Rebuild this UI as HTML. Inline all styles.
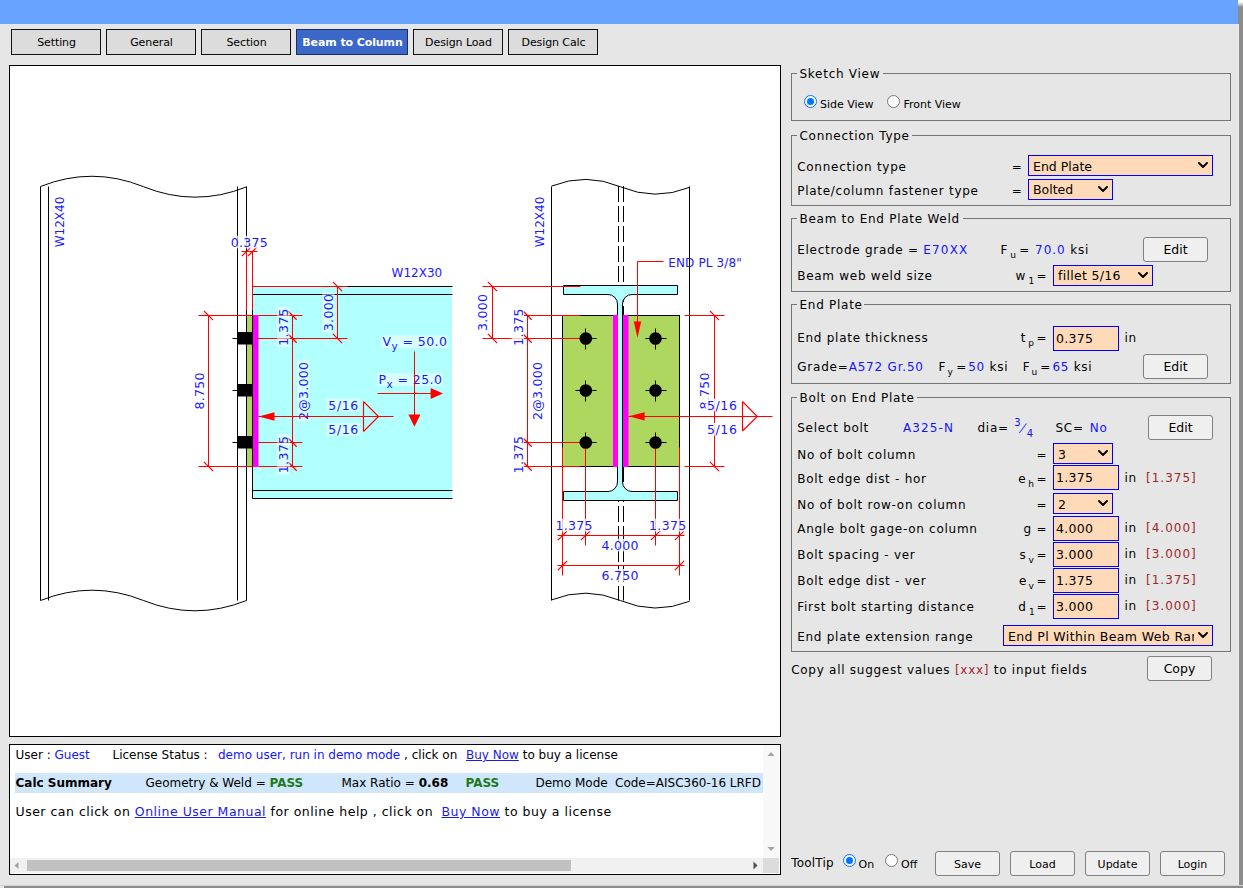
<!DOCTYPE html>
<html><head><meta charset="utf-8"><title>Beam to Column</title>
<style>
html,body{margin:0;padding:0}
body{width:1243px;height:888px;position:relative;overflow:hidden;background:#e6e6e6;font-family:'DejaVu Sans','Liberation Sans',sans-serif;font-size:12px;color:#000}
.t{position:absolute;white-space:nowrap;line-height:normal}
.b{color:#1414ff}
.r{color:#a02828}
.g{color:#1c7a1c}
.lk{color:#1a1ae6;text-decoration:underline}
.tab{position:absolute;top:29px;height:24px;line-height:25px;border:1px solid #111;background:#dcdcdc;text-align:center;font-size:11px;letter-spacing:-0.1px;padding-left:1px}
.tab.act{background:#3b67c8;color:#fff;font-weight:700;border-color:#1b2f66;letter-spacing:-0.1px}
.panel{position:absolute;border:1px solid #000;background:#fff}
.fs{position:absolute;border:1px solid #757575}
.rd{position:absolute;width:11px;height:11px;border:1px solid #767676;border-radius:50%;background:#fff}
.rd.on{border-color:#0075ff}
.rd.on i{position:absolute;left:2px;top:2px;width:7px;height:7px;border-radius:50%;background:#0075ff}
.sel,.inp{position:absolute;border:1px solid #0000ff;background:#ffdab9;white-space:nowrap;overflow:hidden;letter-spacing:0.3px}
.sel span{margin-left:4px}
.sel .cv{position:absolute;right:4px;top:50%;margin-top:-3.5px}
.inp{padding-left:2px;box-sizing:content-box;letter-spacing:0.3px}
.btn{position:absolute;overflow:hidden;border:1px solid #808080;border-radius:3px;background:#efefef;text-align:center}
</style></head>
<body>
<div style="position:absolute;left:0px;top:0px;width:1238px;height:24px;background:#68a3ff"></div>
<div style="position:absolute;left:1238px;top:0px;width:5px;height:888px;background:linear-gradient(to bottom,#fff 0,#fff 2px,#8c8c8c 7px,#8c8c8c 100%)"></div>
<div style="position:absolute;left:4px;top:886px;width:1239px;height:2px;background:#8c8c8c"></div>
<div style="position:absolute;left:0px;top:885px;width:1243px;height:1px;background:#d2d2d2"></div>
<div style="position:absolute;left:1238px;top:24px;width:1px;height:861px;background:#ececec"></div>
<div class="tab" style="left:11px;width:87px">Setting</div>
<div class="tab" style="left:106px;width:87px">General</div>
<div class="tab" style="left:201px;width:87px">Section</div>
<div class="tab act" style="left:296px;width:109px">Beam to Column</div>
<div class="tab" style="left:413px;width:87px">Design Load</div>
<div class="tab" style="left:508px;width:87px">Design Calc</div>
<div class="panel" style="left:9px;top:65px;width:770px;height:670px"></div>
<div class="panel" style="left:9px;top:744px;width:770px;height:129px"></div>
<div class="fs" style="left:791px;top:73px;width:438px;height:46px"></div>
<div style="position:absolute;left:797px;top:71px;width:86.10000000000002px;height:5px;background:#e6e6e6"></div>
<span class="t" style="left:799.50px;top:67.00px;font-size:12px;color:#000;letter-spacing:0.73px;">Sketch View</span>
<div class="fs" style="left:791px;top:135px;width:438px;height:69px"></div>
<div style="position:absolute;left:797px;top:133px;width:115.10000000000002px;height:5px;background:#e6e6e6"></div>
<span class="t" style="left:799.50px;top:129.00px;font-size:12px;color:#000;letter-spacing:0.73px;">Connection Type</span>
<div class="fs" style="left:791px;top:218px;width:438px;height:72px"></div>
<div style="position:absolute;left:797px;top:216px;width:165.79999999999995px;height:5px;background:#e6e6e6"></div>
<span class="t" style="left:799.50px;top:212.00px;font-size:12px;color:#000;letter-spacing:0.73px;">Beam to End Plate Weld</span>
<div class="fs" style="left:791px;top:304px;width:438px;height:78px"></div>
<div style="position:absolute;left:797px;top:302px;width:66.70000000000005px;height:5px;background:#e6e6e6"></div>
<span class="t" style="left:799.50px;top:298.00px;font-size:12px;color:#000;letter-spacing:0.73px;">End Plate</span>
<div class="fs" style="left:791px;top:397px;width:438px;height:253px"></div>
<div style="position:absolute;left:797px;top:395px;width:119.5px;height:5px;background:#e6e6e6"></div>
<span class="t" style="left:799.50px;top:391.00px;font-size:12px;color:#000;letter-spacing:0.73px;">Bolt on End Plate</span>
<div class="rd on" style="left:804.0px;top:95.0px"><i></i></div>
<span class="t" style="left:820.00px;top:98.00px;font-size:11px;color:#000;">Side View</span>
<div class="rd" style="left:886.7px;top:95.0px"></div>
<span class="t" style="left:903.40px;top:98.00px;font-size:11px;color:#000;">Front View</span>
<span class="t" style="left:797.20px;top:160.00px;font-size:12px;color:#000;letter-spacing:0.73px;">Connection type</span>
<span class="t" style="left:1011.70px;top:160.00px;font-size:12px;color:#000;letter-spacing:0.73px;">=</span>
<div class="sel" style="left:1028px;top:155px;width:183px;height:19px;line-height:21px;font-size:12.5px"><span style="position:relative;top:0px;letter-spacing:0px">End Plate</span><svg class="cv" width="10" height="6" viewBox="0 0 10 6"><path d="M1 1 L5 5 L9 1" fill="none" stroke="#000" stroke-width="1.9" stroke-linecap="round" stroke-linejoin="round"/></svg></div>
<span class="t" style="left:797.20px;top:184.00px;font-size:12px;color:#000;letter-spacing:0.73px;">Plate/column fastener type</span>
<span class="t" style="left:1011.70px;top:184.00px;font-size:12px;color:#000;letter-spacing:0.73px;">=</span>
<div class="sel" style="left:1028px;top:179px;width:83px;height:19px;line-height:21px;font-size:12.5px"><span style="position:relative;top:-1px;letter-spacing:0px">Bolted</span><svg class="cv" width="10" height="6" viewBox="0 0 10 6"><path d="M1 1 L5 5 L9 1" fill="none" stroke="#000" stroke-width="1.9" stroke-linecap="round" stroke-linejoin="round"/></svg></div>
<span class="t" style="left:797.20px;top:243.00px;font-size:12px;color:#000;letter-spacing:0.73px;">Electrode grade = <span class="b" style="letter-spacing:1.15px">E70XX</span></span>
<span class="t" style="left:1000.60px;top:243.00px;font-size:12px;color:#000;letter-spacing:0.73px;">F</span>
<span class="t" style="left:1010.30px;top:250.00px;font-size:9px;color:#000;">u</span>
<span class="t" style="left:1019.30px;top:243.00px;font-size:12px;color:#000;letter-spacing:0.73px;">=</span>
<span class="t" style="left:1035.00px;top:243.00px;font-size:12px;color:#000;letter-spacing:0.73px;"><span class="b" style="letter-spacing:1px">70.0</span> ksi</span>
<div class="btn" style="left:1143px;top:237px;width:63px;height:23px;line-height:23px;font-size:12.5px">Edit</div>
<span class="t" style="left:797.20px;top:269.00px;font-size:12px;color:#000;letter-spacing:0.73px;">Beam web weld size</span>
<span class="t" style="left:1015.50px;top:269.00px;font-size:12px;color:#000;letter-spacing:0.73px;">w</span>
<span class="t" style="left:1028.50px;top:276.00px;font-size:9px;color:#000;">1</span>
<span class="t" style="left:1036.50px;top:269.00px;font-size:12px;color:#000;letter-spacing:0.73px;">=</span>
<div class="sel" style="left:1053px;top:265px;width:98px;height:19px;line-height:21px;font-size:12.5px"><span style="position:relative;top:-1px">fillet 5/16</span><svg class="cv" width="10" height="6" viewBox="0 0 10 6"><path d="M1 1 L5 5 L9 1" fill="none" stroke="#000" stroke-width="1.9" stroke-linecap="round" stroke-linejoin="round"/></svg></div>
<span class="t" style="left:797.20px;top:331.00px;font-size:12px;color:#000;letter-spacing:0.73px;">End plate thickness</span>
<span class="t" style="left:1020.80px;top:331.00px;font-size:12px;color:#000;letter-spacing:0.73px;">t</span>
<span class="t" style="left:1028.30px;top:338.00px;font-size:9px;color:#000;">p</span>
<span class="t" style="left:1036.50px;top:331.00px;font-size:12px;color:#000;letter-spacing:0.73px;">=</span>
<div class="inp" style="left:1053px;top:326px;width:62px;height:23px;line-height:23px;font-size:12.5px">0.375</div>
<span class="t" style="left:1124.50px;top:331.00px;font-size:12px;color:#000;letter-spacing:0.73px;">in</span>
<span class="t" style="left:797.20px;top:360.00px;font-size:12px;color:#000;letter-spacing:0.8px;">Grade=<span class="b">A572 Gr.50</span></span>
<span class="t" style="left:938.50px;top:360.00px;font-size:12px;color:#000;letter-spacing:0.73px;">F</span>
<span class="t" style="left:947.60px;top:367.00px;font-size:9px;color:#000;">y</span>
<span class="t" style="left:956.30px;top:360.00px;font-size:12px;color:#000;letter-spacing:0.73px;">=</span>
<span class="t" style="left:968.20px;top:360.00px;font-size:12px;color:#000;letter-spacing:0.73px;"><span class="b">50</span> ksi</span>
<span class="t" style="left:1022.70px;top:360.00px;font-size:12px;color:#000;letter-spacing:0.73px;">F</span>
<span class="t" style="left:1031.40px;top:367.00px;font-size:9px;color:#000;">u</span>
<span class="t" style="left:1040.20px;top:360.00px;font-size:12px;color:#000;letter-spacing:0.73px;">=</span>
<span class="t" style="left:1052.40px;top:360.00px;font-size:12px;color:#000;letter-spacing:0.73px;"><span class="b">65</span> ksi</span>
<div class="btn" style="left:1143px;top:354px;width:63px;height:23px;line-height:23px;font-size:12.5px">Edit</div>
<span class="t" style="left:797.20px;top:421.00px;font-size:12px;color:#000;letter-spacing:0.73px;">Select bolt</span>
<span class="t" style="left:903.00px;top:421.00px;font-size:12px;color:#000;letter-spacing:1.1px;"><span class="b">A325-N</span></span>
<span class="t" style="left:977.50px;top:421.00px;font-size:12px;color:#000;letter-spacing:0.73px;">dia=</span>
<span class="t" style="left:1014.20px;top:417.00px;font-size:10px;color:#000;"><span class="b">3</span></span>
<span class="t" style="left:1020.60px;top:421.00px;font-size:11.5px;color:#000;"><span class="b" style="display:inline-block;transform:skewX(-24deg)">/</span></span>
<span class="t" style="left:1026.80px;top:428.00px;font-size:10px;color:#000;"><span class="b">4</span></span>
<span class="t" style="left:1055.50px;top:421.00px;font-size:12px;color:#000;letter-spacing:0.73px;">SC=</span>
<span class="t" style="left:1089.70px;top:421.00px;font-size:12px;color:#000;letter-spacing:0.73px;"><span class="b">No</span></span>
<div class="btn" style="left:1148px;top:415px;width:63px;height:23px;line-height:23px;font-size:12.5px">Edit</div>
<span class="t" style="left:797.20px;top:448.00px;font-size:12px;color:#000;letter-spacing:0.73px;">No of bolt column</span>
<span class="t" style="left:1036.50px;top:448.00px;font-size:12px;color:#000;letter-spacing:0.73px;">=</span>
<div class="sel" style="left:1053px;top:443px;width:58px;height:19px;line-height:21px;font-size:12.5px"><span style="position:relative;top:0px">3</span><svg class="cv" width="10" height="6" viewBox="0 0 10 6"><path d="M1 1 L5 5 L9 1" fill="none" stroke="#000" stroke-width="1.9" stroke-linecap="round" stroke-linejoin="round"/></svg></div>
<span class="t" style="left:797.20px;top:472.00px;font-size:12px;color:#000;letter-spacing:0.73px;">Bolt edge dist - hor</span>
<span class="t" style="left:1018.20px;top:472.00px;font-size:12px;color:#000;letter-spacing:0.73px;">e</span>
<span class="t" style="left:1028.30px;top:479.00px;font-size:9px;color:#000;">h</span>
<span class="t" style="left:1036.50px;top:472.00px;font-size:12px;color:#000;letter-spacing:0.73px;">=</span>
<div class="inp" style="left:1053px;top:465px;width:62px;height:23px;line-height:23px;font-size:12.5px">1.375</div>
<span class="t" style="left:1124.50px;top:471.00px;font-size:12px;color:#000;letter-spacing:0.73px;">in</span>
<span class="t" style="left:1146.00px;top:471.00px;font-size:12px;color:#000;letter-spacing:1.0px;"><span class="r">[1.375]</span></span>
<span class="t" style="left:797.20px;top:498.00px;font-size:12px;color:#000;letter-spacing:0.73px;">No of bolt row-on column</span>
<span class="t" style="left:1036.50px;top:498.00px;font-size:12px;color:#000;letter-spacing:0.73px;">=</span>
<div class="sel" style="left:1053px;top:493px;width:58px;height:19px;line-height:21px;font-size:12.5px"><span style="position:relative;top:0px">2</span><svg class="cv" width="10" height="6" viewBox="0 0 10 6"><path d="M1 1 L5 5 L9 1" fill="none" stroke="#000" stroke-width="1.9" stroke-linecap="round" stroke-linejoin="round"/></svg></div>
<span class="t" style="left:797.20px;top:522.00px;font-size:12px;color:#000;letter-spacing:0.73px;">Angle bolt gage-on column</span>
<span class="t" style="left:1023.50px;top:522.00px;font-size:12px;color:#000;letter-spacing:0.73px;">g</span>
<span class="t" style="left:1036.50px;top:522.00px;font-size:12px;color:#000;letter-spacing:0.73px;">=</span>
<div class="inp" style="left:1053px;top:516px;width:62px;height:23px;line-height:23px;font-size:12.5px">4.000</div>
<span class="t" style="left:1124.50px;top:521.00px;font-size:12px;color:#000;letter-spacing:0.73px;">in</span>
<span class="t" style="left:1146.00px;top:521.00px;font-size:12px;color:#000;letter-spacing:1.0px;"><span class="r">[4.000]</span></span>
<span class="t" style="left:797.20px;top:548.00px;font-size:12px;color:#000;letter-spacing:0.73px;">Bolt spacing - ver</span>
<span class="t" style="left:1019.50px;top:548.00px;font-size:12px;color:#000;letter-spacing:0.73px;">s</span>
<span class="t" style="left:1028.50px;top:555.00px;font-size:9px;color:#000;">v</span>
<span class="t" style="left:1036.50px;top:548.00px;font-size:12px;color:#000;letter-spacing:0.73px;">=</span>
<div class="inp" style="left:1053px;top:542px;width:62px;height:23px;line-height:23px;font-size:12.5px">3.000</div>
<span class="t" style="left:1124.50px;top:547.00px;font-size:12px;color:#000;letter-spacing:0.73px;">in</span>
<span class="t" style="left:1146.00px;top:547.00px;font-size:12px;color:#000;letter-spacing:1.0px;"><span class="r">[3.000]</span></span>
<span class="t" style="left:797.20px;top:574.00px;font-size:12px;color:#000;letter-spacing:0.73px;">Bolt edge dist - ver</span>
<span class="t" style="left:1019.00px;top:574.00px;font-size:12px;color:#000;letter-spacing:0.73px;">e</span>
<span class="t" style="left:1028.50px;top:581.00px;font-size:9px;color:#000;">v</span>
<span class="t" style="left:1036.50px;top:574.00px;font-size:12px;color:#000;letter-spacing:0.73px;">=</span>
<div class="inp" style="left:1053px;top:568px;width:62px;height:23px;line-height:23px;font-size:12.5px">1.375</div>
<span class="t" style="left:1124.50px;top:573.00px;font-size:12px;color:#000;letter-spacing:0.73px;">in</span>
<span class="t" style="left:1146.00px;top:573.00px;font-size:12px;color:#000;letter-spacing:1.0px;"><span class="r">[1.375]</span></span>
<span class="t" style="left:797.20px;top:600.00px;font-size:12px;color:#000;letter-spacing:0.73px;">First bolt starting distance</span>
<span class="t" style="left:1018.20px;top:600.00px;font-size:12px;color:#000;letter-spacing:0.73px;">d</span>
<span class="t" style="left:1029.00px;top:607.00px;font-size:9px;color:#000;">1</span>
<span class="t" style="left:1036.50px;top:600.00px;font-size:12px;color:#000;letter-spacing:0.73px;">=</span>
<div class="inp" style="left:1053px;top:594px;width:62px;height:23px;line-height:23px;font-size:12.5px">3.000</div>
<span class="t" style="left:1124.50px;top:599.00px;font-size:12px;color:#000;letter-spacing:0.73px;">in</span>
<span class="t" style="left:1146.00px;top:599.00px;font-size:12px;color:#000;letter-spacing:1.0px;"><span class="r">[3.000]</span></span>
<span class="t" style="left:797.20px;top:630.00px;font-size:12px;color:#000;letter-spacing:0.73px;">End plate extension range</span>
<div class="sel" style="left:1003px;top:625px;width:208px;height:19px;line-height:21px;font-size:12.5px;letter-spacing:0.38px"><span style="display:inline-block;width:186px;overflow:hidden;white-space:nowrap;vertical-align:top">End Pl Within Beam Web Range</span><svg class="cv" width="10" height="6" viewBox="0 0 10 6"><path d="M1 1 L5 5 L9 1" fill="none" stroke="#000" stroke-width="1.9" stroke-linecap="round" stroke-linejoin="round"/></svg></div>
<span class="t" style="left:791.20px;top:663.00px;font-size:12px;color:#000;letter-spacing:0.73px;">Copy all suggest values <span class="r">[xxx]</span> to input fields</span>
<div class="btn" style="left:1147px;top:656px;width:63px;height:23px;line-height:23px;font-size:12.5px">Copy</div>
<span class="t" style="left:791.20px;top:856.00px;font-size:12px;color:#000;letter-spacing:0.2px;">ToolTip</span>
<div class="rd on" style="left:842.8px;top:854.2px"><i></i></div>
<span class="t" style="left:858.60px;top:857.50px;font-size:11px;color:#000;">On</span>
<div class="rd" style="left:884.5px;top:854.2px"></div>
<span class="t" style="left:901.00px;top:857.50px;font-size:11px;color:#000;">Off</span>
<div class="btn" style="left:935px;top:851px;width:63px;height:23px;line-height:25px;font-size:11px">Save</div>
<div class="btn" style="left:1010px;top:851px;width:63px;height:23px;line-height:25px;font-size:11px">Load</div>
<div class="btn" style="left:1085px;top:851px;width:63px;height:23px;line-height:25px;font-size:11px">Update</div>
<div class="btn" style="left:1160px;top:851px;width:63px;height:23px;line-height:25px;font-size:11px">Login</div>
<span class="t" style="left:15.50px;top:748.00px;font-size:12px;color:#000;">User : <span class="b">Guest</span></span>
<span class="t" style="left:112.50px;top:748.00px;font-size:12px;color:#000;">License Status :</span>
<span class="t" style="left:218.00px;top:748.00px;font-size:12px;color:#000;"><span class="b">demo user, run in demo mode</span> , click on</span>
<span class="t" style="left:466.00px;top:748.00px;font-size:12px;color:#000;"><span class="lk">Buy Now</span> to buy a license</span>
<div style="position:absolute;left:15px;top:773px;width:748px;height:20px;background:#cfe6fb"></div>
<span class="t" style="left:15.50px;top:776.00px;font-size:12px;color:#000;font-weight:700;">Calc Summary</span>
<span class="t" style="left:145.50px;top:776.00px;font-size:12px;color:#000;">Geometry &amp; Weld = <b class="g">PASS</b></span>
<span class="t" style="left:341.50px;top:776.00px;font-size:12px;color:#000;">Max Ratio = <b>0.68</b></span>
<span class="t" style="left:465.50px;top:776.00px;font-size:12px;color:#000;"><b class="g">PASS</b></span>
<span class="t" style="left:535.50px;top:776.00px;font-size:12px;color:#000;">Demo Mode</span>
<span class="t" style="left:615.00px;top:776.00px;font-size:12px;color:#000;">Code=AISC360-16 LRFD</span>
<span class="t" style="left:15.50px;top:804.00px;font-size:12.5px;color:#000;letter-spacing:0.5px;">User can click on <span class="lk">Online User Manual</span> for online help , click on</span>
<span class="t" style="left:441.50px;top:804.00px;font-size:12.5px;color:#000;letter-spacing:0.5px;"><span class="lk">Buy Now</span> to buy a license</span>
<div style="position:absolute;left:763px;top:745px;width:16px;height:113px;background:#f8f8f8"></div>
<div style="position:absolute;left:10px;top:858px;width:769px;height:15px;background:#f1f1f1"></div>
<div style="position:absolute;left:763px;top:858px;width:16px;height:15px;background:#dcdcdc"></div>
<div style="position:absolute;left:27px;top:860px;width:544px;height:11px;background:#c1c1c1"></div>
<svg style="position:absolute;left:763px;top:745px" width="16" height="113"><path d="M4.5 11 L8 7 L11.5 11Z" fill="#a3a3a3"/><path d="M4.5 102 L8 106 L11.5 102Z" fill="#a3a3a3"/></svg>
<svg style="position:absolute;left:10px;top:858px" width="770" height="15"><path d="M8.5 4 L4.5 7.5 L8.5 11Z" fill="#a3a3a3"/><path d="M743.5 3.5 L747.5 7.5 L743.5 11.5Z" fill="#505050"/></svg>
<svg style="position:absolute;left:10px;top:66px" width="770" height="670" viewBox="10 66 770 670" font-family="'DejaVu Sans','Liberation Sans',sans-serif">
<path d="M40.5,186.5 Q92.0,165.9 143.5,186.7 Q195.0,207.5 246.5,186.9 M40.5,600.5 Q92.0,579.9 143.5,600.5 Q195.0,621.1 246.5,600.5" fill="none" stroke="#000" stroke-width="1"/>
<line x1="40.5" y1="186.5" x2="40.5" y2="600.5" stroke="#000" stroke-width="1" />
<line x1="48.5" y1="186.5" x2="48.5" y2="600.5" stroke="#000" stroke-width="1" />
<line x1="237.5" y1="186.5" x2="237.5" y2="600.5" stroke="#000" stroke-width="1" />
<line x1="246.5" y1="186.5" x2="246.5" y2="600.5" stroke="#000" stroke-width="1" />
<rect x="252.5" y="286.5" width="199.5" height="212.0" fill="#b2ffff"/>
<line x1="252.5" y1="286.5" x2="452.5" y2="286.5" stroke="#000" stroke-width="1" />
<line x1="252.5" y1="498.5" x2="452.5" y2="498.5" stroke="#000" stroke-width="1" />
<line x1="252.5" y1="294.5" x2="452.5" y2="294.5" stroke="#000" stroke-width="1" />
<line x1="252.5" y1="490.5" x2="452.5" y2="490.5" stroke="#000" stroke-width="1" />
<line x1="252.5" y1="286.5" x2="252.5" y2="498.5" stroke="#000" stroke-width="1" />
<rect x="246.5" y="315.5" width="6" height="151.0" fill="#aed75f" stroke="#000" stroke-width="1"/>
<rect x="253" y="315.0" width="5.5" height="152.0" fill="#ff00ff"/>
<rect x="237" y="332.0" width="16" height="12.5" fill="#000"/>
<line x1="232.5" y1="338.5" x2="237.5" y2="338.5" stroke="#000" stroke-width="1" />
<rect x="237" y="384.0" width="16" height="12.5" fill="#000"/>
<line x1="232.5" y1="390.5" x2="237.5" y2="390.5" stroke="#000" stroke-width="1" />
<rect x="237" y="436.0" width="16" height="12.5" fill="#000"/>
<line x1="232.5" y1="442.5" x2="237.5" y2="442.5" stroke="#000" stroke-width="1" />
<line x1="246.5" y1="251.5" x2="246.5" y2="310.5" stroke="#ff0000" stroke-width="1" />
<line x1="252.5" y1="251.5" x2="252.5" y2="310.5" stroke="#ff0000" stroke-width="1" />
<line x1="241.5" y1="251.5" x2="257.5" y2="251.5" stroke="#ff0000" stroke-width="1" />
<line x1="241.9" y1="256.1" x2="251.1" y2="246.9" stroke="#ff0000" stroke-width="1.25"/>
<line x1="247.9" y1="256.1" x2="257.1" y2="246.9" stroke="#ff0000" stroke-width="1.25"/>
<g transform="translate(230.8,246.8)"><rect x="-1.4" y="-11.0" width="40.1" height="12.6" fill="#fff" fill-opacity="0.75"/><text font-size="12.5" fill="#1a1aff" letter-spacing="0.3">0.375</text></g>
<line x1="198.5" y1="315.5" x2="252.5" y2="315.5" stroke="#ff0000" stroke-width="1" />
<line x1="198.5" y1="466.5" x2="252.5" y2="466.5" stroke="#ff0000" stroke-width="1" />
<line x1="208.5" y1="315.5" x2="208.5" y2="466.5" stroke="#ff0000" stroke-width="1" />
<line x1="203.9" y1="310.9" x2="213.1" y2="320.1" stroke="#ff0000" stroke-width="1.25"/>
<line x1="203.9" y1="461.9" x2="213.1" y2="471.1" stroke="#ff0000" stroke-width="1.25"/>
<g transform="translate(204.4,390.8) rotate(-90)"><rect x="-20.0" y="-11.0" width="40.1" height="12.6" fill="#fff" fill-opacity="0.75"/><text font-size="12.5" fill="#1a1aff" text-anchor="middle" letter-spacing="0.3">8.750</text></g>
<line x1="258.5" y1="315.5" x2="302.5" y2="315.5" stroke="#ff0000" stroke-width="1" />
<line x1="258.5" y1="466.5" x2="302.5" y2="466.5" stroke="#ff0000" stroke-width="1" />
<line x1="257.5" y1="338.5" x2="347.5" y2="338.5" stroke="#ff0000" stroke-width="1" />
<line x1="258.5" y1="442.5" x2="302.5" y2="442.5" stroke="#ff0000" stroke-width="1" />
<line x1="292.5" y1="315.5" x2="292.5" y2="466.5" stroke="#ff0000" stroke-width="1" />
<line x1="288.3" y1="311.3" x2="296.7" y2="319.7" stroke="#ff0000" stroke-width="1.25"/>
<line x1="288.3" y1="334.3" x2="296.7" y2="342.7" stroke="#ff0000" stroke-width="1.25"/>
<line x1="288.3" y1="438.3" x2="296.7" y2="446.7" stroke="#ff0000" stroke-width="1.25"/>
<line x1="288.3" y1="462.3" x2="296.7" y2="470.7" stroke="#ff0000" stroke-width="1.25"/>
<g transform="translate(288.2,327) rotate(-90)"><rect x="-20.0" y="-11.0" width="40.1" height="12.6" fill="#fff" fill-opacity="0.5"/><text font-size="12.5" fill="#1a1aff" text-anchor="middle" letter-spacing="0.3">1.375</text></g>
<g transform="translate(288.2,454.5) rotate(-90)"><rect x="-20.0" y="-11.0" width="40.1" height="12.6" fill="#fff" fill-opacity="0.5"/><text font-size="12.5" fill="#1a1aff" text-anchor="middle" letter-spacing="0.3">1.375</text></g>
<g transform="translate(308.3,390.8) rotate(-90)"><rect x="-30.6" y="-11.0" width="61.2" height="12.6" fill="#fff" fill-opacity="0.5"/><text font-size="12.5" fill="#1a1aff" text-anchor="middle" letter-spacing="0.3">2@3.000</text></g>
<line x1="252.5" y1="286.5" x2="347.5" y2="286.5" stroke="#ff0000" stroke-width="1" />
<line x1="337.5" y1="286.5" x2="337.5" y2="338.5" stroke="#ff0000" stroke-width="1" />
<line x1="332.9" y1="281.9" x2="342.1" y2="291.1" stroke="#ff0000" stroke-width="1.25"/>
<line x1="332.9" y1="333.9" x2="342.1" y2="343.1" stroke="#ff0000" stroke-width="1.25"/>
<g transform="translate(333.2,312.5) rotate(-90)"><rect x="-20.0" y="-11.0" width="40.1" height="12.6" fill="#fff" fill-opacity="0.5"/><text font-size="12.5" fill="#1a1aff" text-anchor="middle" letter-spacing="0.3">3.000</text></g>
<line x1="258.5" y1="416.5" x2="393.5" y2="416.5" stroke="#ff0000" stroke-width="1" />
<path d="M258.6,416.5 L274.5,412.3 L274.5,420.7Z" fill="#ff0000"/>
<path d="M363.5,401.5 L363.5,431.5 M363.5,401.5 L378.5,416.5 L363.5,431.5" fill="none" stroke="#ff0000" stroke-width="1.15"/>
<g transform="translate(328.3,409.5)"><rect x="-1.4" y="-11.0" width="33.4" height="12.6" fill="#fff" fill-opacity="0.5"/><text font-size="12.5" fill="#1a1aff" letter-spacing="0.65">5/16</text></g>
<g transform="translate(328.3,434)"><rect x="-1.4" y="-11.0" width="33.4" height="12.6" fill="#fff" fill-opacity="0.5"/><text font-size="12.5" fill="#1a1aff" letter-spacing="0.65">5/16</text></g>
<g transform="translate(382.6,346.4)"><rect x="-1.4" y="-11.0" width="67.3" height="12.6" fill="#fff" fill-opacity="0.5"/><text font-size="12.5" fill="#1a1aff" letter-spacing="0.4">V<tspan font-size="10.5" dy="3.8">y</tspan><tspan dy="-3.8"> = 50.0</tspan></text></g>
<g transform="translate(378.6,384.3)"><rect x="-1.4" y="-11.0" width="65.8" height="12.6" fill="#fff" fill-opacity="0.5"/><text font-size="12.5" fill="#1a1aff" letter-spacing="0.4">P<tspan font-size="10.5" dy="3.8">x</tspan><tspan dy="-3.8"> = 25.0</tspan></text></g>
<line x1="414.5" y1="351.5" x2="414.5" y2="416.5" stroke="#ff0000" stroke-width="1" />
<path d="M414.4,426.8 L408.4,414.4 L420.4,414.4Z" fill="#ff0000"/>
<line x1="377.5" y1="393.5" x2="432.5" y2="393.5" stroke="#ff0000" stroke-width="1" />
<path d="M443,393.5 L430.6,387.9 L430.6,399.1Z" fill="#ff0000"/>
<g transform="translate(391.6,276.6)"><text font-size="12" fill="#1a1aff" letter-spacing="0">W12X30</text></g>
<g transform="translate(63.8,222) rotate(-90)"><text font-size="12" fill="#1a1aff" text-anchor="middle" letter-spacing="0">W12X40</text></g>
<path d="M551.5,186.1 Q586.0,172.3 620.5,186.8 Q655.0,201.2 689.5,187.4 M551.5,599.9 Q586.0,586.1 620.5,600.6 Q655.0,615.1 689.5,601.3" fill="none" stroke="#000" stroke-width="1"/>
<line x1="551.5" y1="186.5" x2="551.5" y2="600.5" stroke="#000" stroke-width="1" />
<line x1="689.5" y1="186.5" x2="689.5" y2="600.5" stroke="#000" stroke-width="1" />
<line x1="618.5" y1="186" x2="618.5" y2="600.5" stroke="#000" stroke-width="1" stroke-dasharray="16 4"/>
<line x1="623.5" y1="186" x2="623.5" y2="600.5" stroke="#000" stroke-width="1" stroke-dasharray="16 4"/>
<rect x="562.5" y="315.5" width="117.0" height="151.0" fill="#aed75f" stroke="#000" stroke-width="1"/>
<path d="M563.5,285.5 L677.5,285.5 L677.5,294.5 L632.0,294.5 A9.5,9.5 0 0 0 622.5,304.0 L622.5,482.0 A9.5,9.5 0 0 0 632.0,491.5 L677.5,491.5 L677.5,500.5 L563.5,500.5 L563.5,491.5 L608.0,491.5 A9.5,9.5 0 0 0 617.5,482.0 L617.5,304.0 A9.5,9.5 0 0 0 608.0,294.5 L563.5,294.5 Z" fill="#b2ffff" stroke="#000" stroke-width="1"/>
<rect x="613" y="315.0" width="5" height="152.0" fill="#ff00ff"/>
<rect x="623" y="315.0" width="5.5" height="152.0" fill="#ff00ff"/>
<line x1="623.5" y1="306" x2="623.5" y2="315" stroke="#000" stroke-width="1"/>
<line x1="623.5" y1="467" x2="623.5" y2="482" stroke="#000" stroke-width="1"/>
<line x1="575.5" y1="338.5" x2="596.5" y2="338.5" stroke="#000" stroke-width="1" />
<line x1="585.5" y1="328.5" x2="585.5" y2="349.5" stroke="#000" stroke-width="1" />
<line x1="645.5" y1="338.5" x2="666.5" y2="338.5" stroke="#000" stroke-width="1" />
<line x1="655.5" y1="328.5" x2="655.5" y2="349.5" stroke="#000" stroke-width="1" />
<line x1="575.5" y1="390.5" x2="596.5" y2="390.5" stroke="#000" stroke-width="1" />
<line x1="585.5" y1="380.5" x2="585.5" y2="401.5" stroke="#000" stroke-width="1" />
<line x1="645.5" y1="390.5" x2="666.5" y2="390.5" stroke="#000" stroke-width="1" />
<line x1="655.5" y1="380.5" x2="655.5" y2="401.5" stroke="#000" stroke-width="1" />
<line x1="575.5" y1="442.5" x2="596.5" y2="442.5" stroke="#000" stroke-width="1" />
<line x1="585.5" y1="432.5" x2="585.5" y2="453.5" stroke="#000" stroke-width="1" />
<line x1="645.5" y1="442.5" x2="666.5" y2="442.5" stroke="#000" stroke-width="1" />
<line x1="655.5" y1="432.5" x2="655.5" y2="453.5" stroke="#000" stroke-width="1" />
<line x1="482.5" y1="286.5" x2="580.5" y2="286.5" stroke="#ff0000" stroke-width="1" />
<line x1="482.5" y1="338.5" x2="585.5" y2="338.5" stroke="#ff0000" stroke-width="1" />
<line x1="492.5" y1="286.5" x2="492.5" y2="338.5" stroke="#ff0000" stroke-width="1" />
<line x1="487.9" y1="281.9" x2="497.1" y2="291.1" stroke="#ff0000" stroke-width="1.25"/>
<line x1="487.9" y1="333.9" x2="497.1" y2="343.1" stroke="#ff0000" stroke-width="1.25"/>
<g transform="translate(487,312.3) rotate(-90)"><rect x="-20.0" y="-11.0" width="40.1" height="12.6" fill="#fff" fill-opacity="0.75"/><text font-size="12.5" fill="#1a1aff" text-anchor="middle" letter-spacing="0.3">3.000</text></g>
<line x1="523.5" y1="315.5" x2="580.5" y2="315.5" stroke="#ff0000" stroke-width="1" />
<line x1="523.5" y1="466.5" x2="580.5" y2="466.5" stroke="#ff0000" stroke-width="1" />
<line x1="523.5" y1="442.5" x2="585.5" y2="442.5" stroke="#ff0000" stroke-width="1" />
<line x1="527.5" y1="315.5" x2="527.5" y2="466.5" stroke="#ff0000" stroke-width="1" />
<line x1="523.3" y1="311.3" x2="531.7" y2="319.7" stroke="#ff0000" stroke-width="1.25"/>
<line x1="523.3" y1="334.3" x2="531.7" y2="342.7" stroke="#ff0000" stroke-width="1.25"/>
<line x1="523.3" y1="438.3" x2="531.7" y2="446.7" stroke="#ff0000" stroke-width="1.25"/>
<line x1="523.3" y1="462.3" x2="531.7" y2="470.7" stroke="#ff0000" stroke-width="1.25"/>
<g transform="translate(522.5,327) rotate(-90)"><rect x="-20.0" y="-11.0" width="40.1" height="12.6" fill="#fff" fill-opacity="0.75"/><text font-size="12.5" fill="#1a1aff" text-anchor="middle" letter-spacing="0.3">1.375</text></g>
<g transform="translate(522.5,454.5) rotate(-90)"><rect x="-20.0" y="-11.0" width="40.1" height="12.6" fill="#fff" fill-opacity="0.75"/><text font-size="12.5" fill="#1a1aff" text-anchor="middle" letter-spacing="0.3">1.375</text></g>
<g transform="translate(542.4,390.8) rotate(-90)"><rect x="-30.6" y="-11.0" width="61.2" height="12.6" fill="#fff" fill-opacity="0.75"/><text font-size="12.5" fill="#1a1aff" text-anchor="middle" letter-spacing="0.3">2@3.000</text></g>
<line x1="684.5" y1="315.5" x2="724.5" y2="315.5" stroke="#ff0000" stroke-width="1" />
<line x1="684.5" y1="466.5" x2="724.5" y2="466.5" stroke="#ff0000" stroke-width="1" />
<line x1="714.5" y1="315.5" x2="714.5" y2="466.5" stroke="#ff0000" stroke-width="1" />
<line x1="709.9" y1="310.9" x2="719.1" y2="320.1" stroke="#ff0000" stroke-width="1.25"/>
<line x1="709.9" y1="461.9" x2="719.1" y2="471.1" stroke="#ff0000" stroke-width="1.25"/>
<g transform="translate(709,390.8) rotate(-90)"><rect x="-20.0" y="-11.0" width="40.1" height="12.6" fill="#fff" fill-opacity="0.75"/><text font-size="12.5" fill="#1a1aff" text-anchor="middle" letter-spacing="0.3">8.750</text></g>
<line x1="562.5" y1="447.5" x2="562.5" y2="575.5" stroke="#ff0000" stroke-width="1" />
<line x1="679.5" y1="447.5" x2="679.5" y2="575.5" stroke="#ff0000" stroke-width="1" />
<line x1="585.5" y1="442.5" x2="585.5" y2="545.5" stroke="#ff0000" stroke-width="1" />
<line x1="655.5" y1="442.5" x2="655.5" y2="545.5" stroke="#ff0000" stroke-width="1" />
<line x1="557.5" y1="535.5" x2="684.5" y2="535.5" stroke="#ff0000" stroke-width="1" />
<line x1="557.9" y1="540.1" x2="567.1" y2="530.9" stroke="#ff0000" stroke-width="1.25"/>
<line x1="580.9" y1="540.1" x2="590.1" y2="530.9" stroke="#ff0000" stroke-width="1.25"/>
<line x1="650.9" y1="540.1" x2="660.1" y2="530.9" stroke="#ff0000" stroke-width="1.25"/>
<line x1="674.9" y1="540.1" x2="684.1" y2="530.9" stroke="#ff0000" stroke-width="1.25"/>
<line x1="557.5" y1="565.5" x2="684.5" y2="565.5" stroke="#ff0000" stroke-width="1" />
<line x1="557.9" y1="570.1" x2="567.1" y2="560.9" stroke="#ff0000" stroke-width="1.25"/>
<line x1="674.9" y1="570.1" x2="684.1" y2="560.9" stroke="#ff0000" stroke-width="1.25"/>
<circle cx="585.8" cy="338.5" r="6.3" fill="#000"/>
<circle cx="655.5" cy="338.5" r="6.3" fill="#000"/>
<circle cx="585.8" cy="390.5" r="6.3" fill="#000"/>
<circle cx="655.5" cy="390.5" r="6.3" fill="#000"/>
<circle cx="585.8" cy="442.5" r="6.3" fill="#000"/>
<circle cx="655.5" cy="442.5" r="6.3" fill="#000"/>
<g transform="translate(706.9,409.7)"><rect x="-1.4" y="-11.0" width="33.4" height="12.6" fill="#fff" fill-opacity="0.85"/><text font-size="12.5" fill="#1a1aff" letter-spacing="0.65">5/16</text></g>
<g transform="translate(706.9,433.9)"><rect x="-1.4" y="-11.0" width="33.4" height="12.6" fill="#fff" fill-opacity="0.85"/><text font-size="12.5" fill="#1a1aff" letter-spacing="0.65">5/16</text></g>
<line x1="628.5" y1="416.5" x2="772.5" y2="416.5" stroke="#ff0000" stroke-width="1" />
<path d="M628.7,416.3 L644.6,412.2 L644.6,420.4Z" fill="#ff0000"/>
<path d="M742.5,401.5 L742.5,431 M742.5,401.5 L757.3,416.5 L742.5,431" fill="none" stroke="#ff0000" stroke-width="1.15"/>
<line x1="637.5" y1="261.5" x2="663.5" y2="261.5" stroke="#ff0000" stroke-width="1" />
<line x1="637.5" y1="261.5" x2="637.5" y2="325.5" stroke="#ff0000" stroke-width="1" />
<path d="M637.5,337.8 L633.8,321.6 L641.2,321.6Z" fill="#ff0000"/>
<g transform="translate(668.3,266.7)"><text font-size="12" fill="#1a1aff" letter-spacing="0.12">END PL 3/8"</text></g>
<g transform="translate(555.5,529.8)"><rect x="-1.4" y="-11.0" width="40.1" height="12.6" fill="#fff" fill-opacity="0.75"/><text font-size="12.5" fill="#1a1aff" letter-spacing="0.3">1.375</text></g>
<g transform="translate(649.1,529.8)"><rect x="-1.4" y="-11.0" width="40.1" height="12.6" fill="#fff" fill-opacity="0.75"/><text font-size="12.5" fill="#1a1aff" letter-spacing="0.3">1.375</text></g>
<g transform="translate(601.5,549.8)"><rect x="-1.4" y="-11.0" width="40.1" height="12.6" fill="#fff" fill-opacity="0.75"/><text font-size="12.5" fill="#1a1aff" letter-spacing="0.3">4.000</text></g>
<g transform="translate(601.5,580)"><rect x="-1.4" y="-11.0" width="40.1" height="12.6" fill="#fff" fill-opacity="0.75"/><text font-size="12.5" fill="#1a1aff" letter-spacing="0.3">6.750</text></g>
<g transform="translate(543.8,222) rotate(-90)"><text font-size="12" fill="#1a1aff" text-anchor="middle" letter-spacing="0">W12X40</text></g>
</svg>
</body></html>
